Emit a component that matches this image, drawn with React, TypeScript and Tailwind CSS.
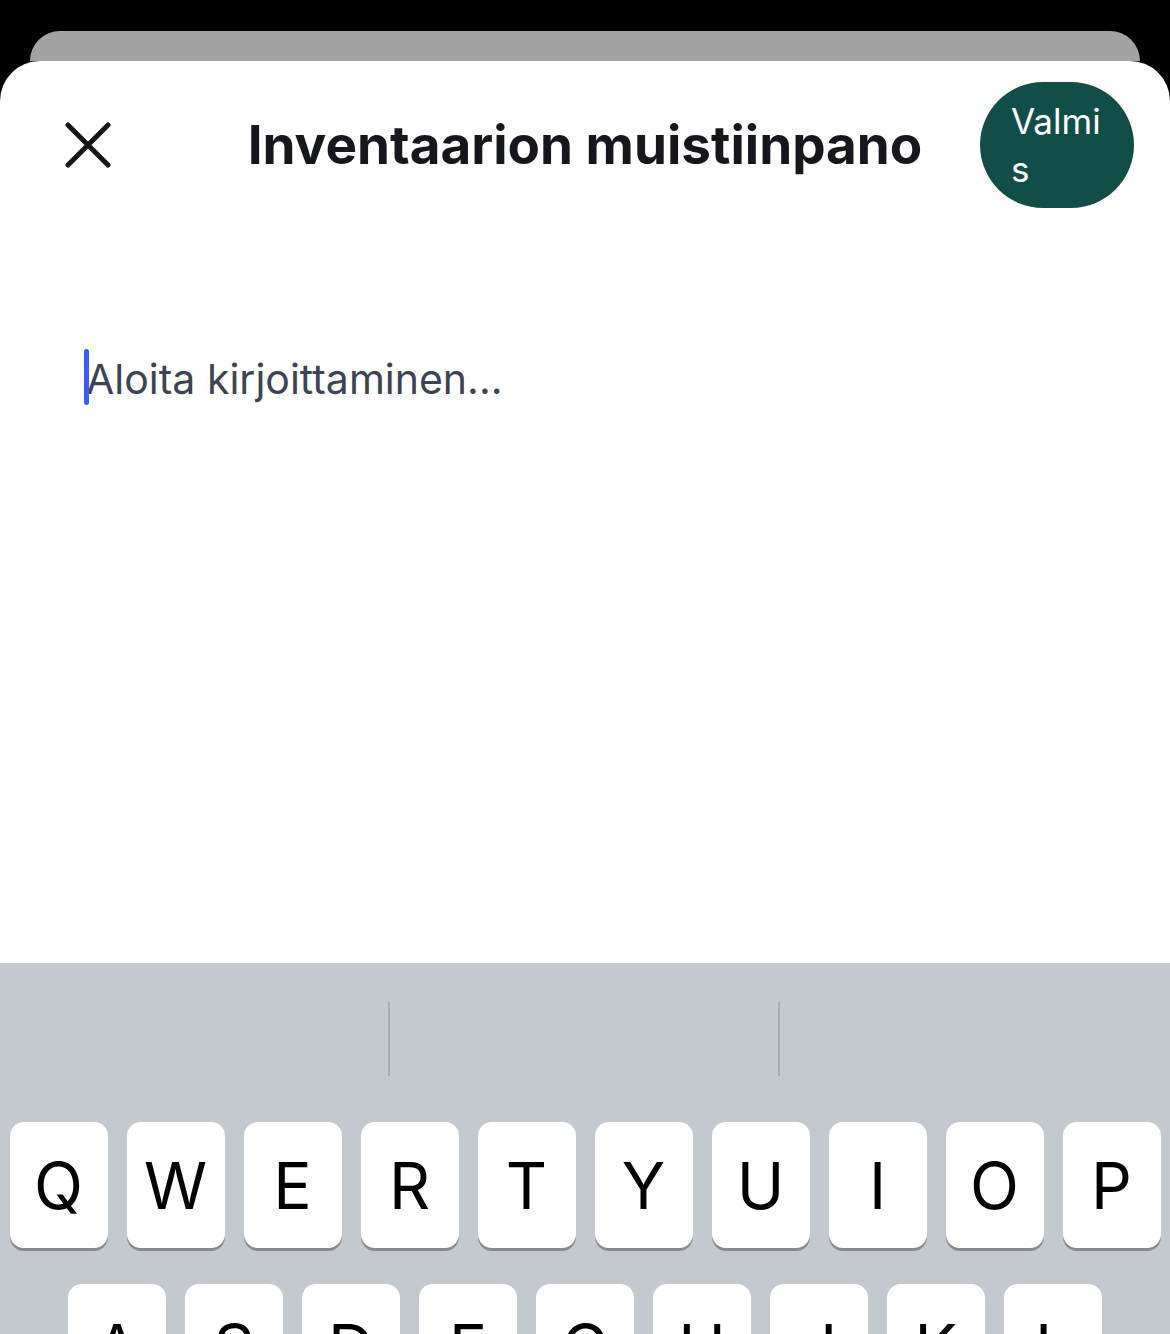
import React from 'react';

const rowOne = ['Q', 'W', 'E', 'R', 'T', 'Y', 'U', 'I', 'O', 'P'];
const rowTwo = ['A', 'S', 'D', 'F', 'G', 'H', 'J', 'K', 'L'];

function Key({ label }: { label: string }) {
    return (
        <div className="w-[98px] h-[126px] shrink-0 bg-white rounded-[14px] shadow-[0_3px_0_#898a8d] flex items-center justify-center text-[64px] font-normal text-black leading-none pt-[2px]">
            {label}
        </div>
    );
}

export default function App() {
    return (
        <div
            className="w-[1170px] h-[1334px] bg-black overflow-hidden flex flex-col"
            style={{ fontFamily: 'Inter, "Noto Sans", sans-serif' }}
        >
            <div className="pt-[31px] px-[30px] shrink-0">
                <div className="h-[30px] bg-[#a3a3a3] rounded-t-[30px]" />
            </div>

            <div className="flex-1 bg-white rounded-t-[40px] flex flex-col overflow-hidden">
                {/* header */}
                <div className="shrink-0 grid grid-cols-[1fr_auto_1fr] items-center pt-[21px]">
                    <div className="pl-[65px] flex items-center">
                        <svg width="46" height="46" viewBox="0 0 46 46" fill="none">
                            <path d="M3 3L43 43M43 3L3 43" stroke="#15171c" strokeWidth="5" strokeLinecap="round" />
                        </svg>
                    </div>
                    <h1 className="text-[53px] font-bold text-[#15171c] leading-none">
                        Inventaarion muistiinpano
                    </h1>
                    <div className="flex justify-end pr-[36px]">
                        <button className="w-[154px] h-[126px] rounded-full bg-[#124e48] text-white text-[35px] leading-[48px] text-left pl-[31px]">
                            Valmi
                            <br />s
                        </button>
                    </div>
                </div>

                {/* editor */}
                <div className="shrink-0 h-[755px] pt-[147px]">
                    <div className="relative pl-[86px]">
                        <span className="absolute left-[84px] -top-[6px] w-[5px] h-[56px] rounded-full bg-[#3b5bfd]" />
                        <p className="text-[41px] leading-[48px] text-[#3d4451]">Aloita kirjoittaminen...</p>
                    </div>
                </div>

                {/* keyboard */}
                <div className="shrink-0 h-[400px] bg-[#c4c8cf] pt-[39px]">
                    <div className="grid grid-cols-3 h-[74px]">
                        <div />
                        <div className="border-l-2 border-[#a9adb3] -ml-[2px]" />
                        <div className="border-l-2 border-[#a9adb3] -ml-[2px]" />
                    </div>
                    <div className="mt-[46px] flex justify-center gap-[19px]">
                        {rowOne.map((k) => (
                            <Key key={k} label={k} />
                        ))}
                    </div>
                    <div className="mt-[36px] flex justify-center gap-[19px]">
                        {rowTwo.map((k) => (
                            <Key key={k} label={k} />
                        ))}
                    </div>
                </div>
            </div>
        </div>
    );
}
